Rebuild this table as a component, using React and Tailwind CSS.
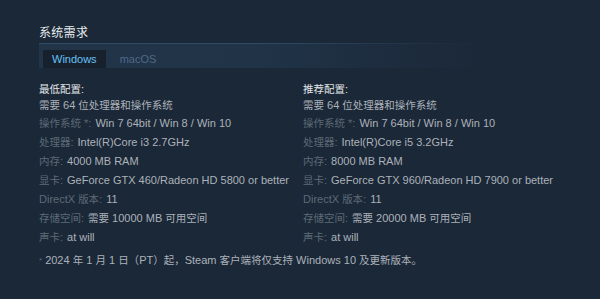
import React from "react";

const FONT = { fontFamily: '"Liberation Sans", Arial, "Noto Sans CJK SC", sans-serif' };

function T({ children }) {
  const parts = String(children).split(/([\u3000-\u303f\u4e00-\u9fff\uff00-\uffef]+)/);
  return (
    <>
      {parts.map((p, i) =>
        i % 2 === 1 ? (
          <span key={i} className="text-[10.5px]">{p}</span>
        ) : (
          <React.Fragment key={i}>{p}</React.Fragment>
        )
      )}
    </>
  );
}

function Row({ label, value }) {
  return (
    <div className="h-[19px] leading-[19px] whitespace-nowrap">
      <span className="text-[#5d6a76] mr-[4px]"><T>{label}</T></span>
      <span className="text-[#acb2b8]"><T>{value}</T></span>
    </div>
  );
}

function Column({ title, rows }) {
  return (
    <div className="flex flex-col">
      <div className="h-[15px] leading-[15px] text-[#e2e5e8]"><T>{title}</T></div>
      <div className="h-[17px] leading-[17px] text-[#acb2b8] whitespace-nowrap"><T>需要 64 位处理器和操作系统</T></div>
      {rows.map((r, i) => (
        <Row key={i} label={r[0]} value={r[1]} />
      ))}
    </div>
  );
}

export default function App() {
  const min = [
    ["操作系统 *:", "Win 7 64bit / Win 8 / Win 10"],
    ["处理器:", "Intel(R)Core i3 2.7GHz"],
    ["内存:", "4000 MB RAM"],
    ["显卡:", "GeForce GTX 460/Radeon HD 5800 or better"],
    ["DirectX 版本:", "11"],
    ["存储空间:", "需要 10000 MB 可用空间"],
    ["声卡:", "at will"],
  ];
  const rec = [
    ["操作系统 *:", "Win 7 64bit / Win 8 / Win 10"],
    ["处理器:", "Intel(R)Core i5 3.2GHz"],
    ["内存:", "8000 MB RAM"],
    ["显卡:", "GeForce GTX 960/Radeon HD 7900 or better"],
    ["DirectX 版本:", "11"],
    ["存储空间:", "需要 20000 MB 可用空间"],
    ["声卡:", "at will"],
  ];
  return (
    <div className="w-[600px] h-[299px] bg-[#1b2838] pl-[39px] pt-[25px] text-[11px] overflow-hidden" style={FONT}>
      <div className="w-[443px] text-[12px] h-[17px] leading-[17px] text-[#e8ebee] tracking-[0.3px]">系统需求</div>
      <div className="w-[443px] h-[1px] mt-[1px] bg-gradient-to-r from-[#2e4b68] via-[#2e4b68] to-[#1b2838]" />
      <div className="w-[443px] h-[24px] flex items-end pl-[4px] bg-gradient-to-r from-[#213448] via-[#203347] to-[#1b2838]">
        <div className="h-[18px] px-[9px] leading-[18px] bg-[#17212e] text-[#67c1f5]">Windows</div>
        <div className="h-[18px] px-[9px] ml-[5px] leading-[18px] text-[#4e6a87]">macOS</div>
      </div>
      <div className="flex mt-[14px]">
        <div className="w-[264px]">
          <Column title="最低配置:" rows={min} />
        </div>
        <div>
          <Column title="推荐配置:" rows={rec} />
        </div>
      </div>
      <div className="mt-[4px] h-[19px] leading-[19px] text-[#acb2b8] whitespace-nowrap">
        <span className="text-[#5d6a76] text-[8px] align-top mr-[3px]">*</span><T>2024 年 1 月 1 日（PT）起，Steam 客户端将仅支持 Windows 10 及更新版本。</T>
      </div>
    </div>
  );
}
